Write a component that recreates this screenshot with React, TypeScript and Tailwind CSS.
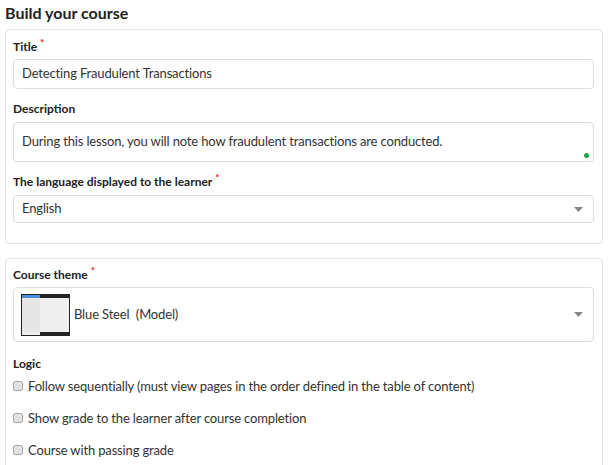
import { useState } from "react";

const FONT = { fontFamily: "Lato, 'Open Sans', sans-serif" };

function Label({ text, required }: { text: string; required?: boolean }) {
  return (
    <div className="text-[12px] leading-[20px] font-bold text-[#222]">
      {text}
      {required ? (
        <span className="relative -top-[5px] ml-[3px] text-[10px] text-[#e02020]">*</span>
      ) : null}
    </div>
  );
}

function Caret() {
  return (
    <svg width="9" height="5" viewBox="0 0 9 5" className="shrink-0">
      <path d="M0 0h9L4.5 5z" fill="#888" />
    </svg>
  );
}

function ThemeThumb() {
  return (
    <div className="flex h-[42px] w-[49px] shrink-0 flex-col border border-[#222] bg-[#ececec]">
      <div className="flex h-[3px]">
        <div className="w-[18px] bg-[#4a90d9]" />
        <div className="flex-1 bg-[#222]" />
      </div>
      <div className="flex flex-1">
        <div className="w-[18px] bg-[#e6e6e6]" />
        <div className="flex-1 bg-[#efefef]" />
      </div>
      <div className="flex h-[3px]">
        <div className="w-[18px]" />
        <div className="flex-1 bg-[#222]" />
      </div>
    </div>
  );
}

function CheckRow({ text }: { text: string }) {
  const [on, setOn] = useState(false);
  return (
    <label className="flex items-center gap-[5px] text-[13px] leading-[20px] tracking-[-0.15px] text-[#333]">
      <input
        type="checkbox"
        checked={on}
        onChange={() => setOn(!on)}
        className="m-0 h-[10px] w-[10px] appearance-none rounded-[2px] border border-[#aaa] bg-[#e2e2e2]"
      />
      {text}
    </label>
  );
}

export default function App() {
  return (
    <div className="min-h-[465px] bg-white px-[5px] pt-[1px]" style={FONT}>
      <h1 className="mb-[4px] text-[16px] leading-[24px] font-bold text-[#222]">
        Build your course
      </h1>

      <div className="w-[598px] rounded-[4px] border border-[#e2e2e2] pt-[7px] pr-[8px] pb-[20px] pl-[7px]">
        <Label text="Title" required />
        <div className="mt-[2px] flex h-[30px] items-center rounded-[4px] border border-[#ddd] px-[8px] text-[13px] tracking-[-0.15px] text-[#333]">
          Detecting Fraudulent Transactions
        </div>

        <div className="mt-[10px]">
          <Label text="Description" />
        </div>
        <div className="relative mt-[3px] flex h-[40px] items-center rounded-[4px] border border-[#ddd] px-[8px] text-[13px] tracking-[-0.15px] text-[#333]">
          During this lesson, you will note how fraudulent transactions are conducted.
          <span className="absolute right-[4px] bottom-[3px] h-[5px] w-[5px] rounded-full bg-[#1ea54a]" />
        </div>

        <div className="mt-[10px]">
          <Label text="The language displayed to the learner" required />
        </div>
        <div className="mt-[3px] flex h-[28px] items-center justify-between rounded-[4px] border border-[#ddd] pr-[10px] pl-[8px] text-[13px] tracking-[-0.15px] text-[#333]">
          <span>English</span>
          <Caret />
        </div>
      </div>

      <div className="mt-[14px] w-[598px] rounded-[4px] border border-[#e2e2e2] pt-[6px] pr-[8px] pb-[20px] pl-[7px]">
        <Label text="Course theme" required />
        <div className="mt-[2px] flex h-[55px] items-center gap-[4px] rounded-[4px] border border-[#ddd] pr-[10px] pl-[7px] text-[13px] tracking-[-0.15px] text-[#333]">
          <ThemeThumb />
          <span className="flex-1 whitespace-pre">Blue Steel  (Model)</span>
          <Caret />
        </div>

        <div className="mt-[12px]">
          <Label text="Logic" />
        </div>
        <div className="mt-[2px] flex flex-col gap-[12px]">
          <CheckRow text="Follow sequentially (must view pages in the order defined in the table of content)" />
          <CheckRow text="Show grade to the learner after course completion" />
          <CheckRow text="Course with passing grade" />
        </div>
      </div>
    </div>
  );
}
